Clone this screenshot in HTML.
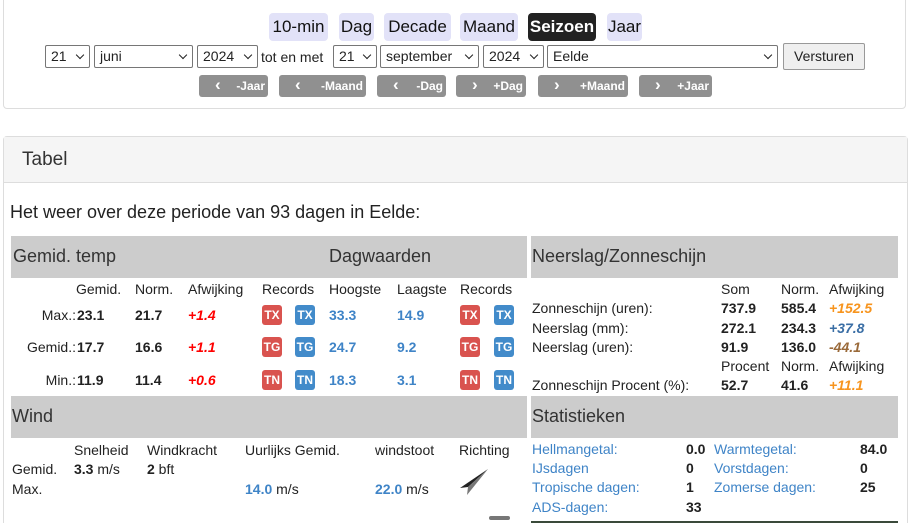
<!DOCTYPE html>
<html style="height:523px;overflow:hidden"><head><meta charset="utf-8"><style>
*{margin:0;padding:0;box-sizing:border-box}
body{width:908px;height:523px;overflow:hidden;background:#fff;font-family:"Liberation Sans",sans-serif;color:#222;position:relative}
.a{position:absolute;white-space:nowrap}
.tab{position:absolute;top:13px;height:28px;background:#e2e2f8;border-radius:4px;font-size:17px;line-height:28px;text-align:center;color:#111}
.sel{position:absolute;top:45px;height:23px;border:1px solid #767676;border-radius:2px;font-size:14px;line-height:21px;padding-left:5px;background:#fff}
.sel:after{content:"";position:absolute;right:6px;top:6px;width:5px;height:5px;border-right:1.5px solid #222;border-bottom:1.5px solid #222;transform:rotate(45deg)}
.nav{position:absolute;top:75px;height:22px;background:#909090;border-radius:3px;color:#fff;font-weight:bold;font-size:12px;line-height:22px}
.nav i{position:absolute;left:16px;top:0;font-style:normal;font-size:17px;line-height:20px}
.nav b{position:absolute;right:3px}
.gh{position:absolute;background:#ccc;font-size:18px;color:#333}
.t{position:absolute;font-size:14px;white-space:nowrap;line-height:16px}
.b{font-weight:bold}
.bl{color:#3f84c7}
.bd{width:20px;height:20px;border-radius:3px;color:#fff;font-weight:bold;font-size:12px;line-height:20px;text-align:center;position:absolute}
.r{background:#d9534f}.u{background:#428bca}
</style></head><body>
<div class="a" style="left:3px;top:-5px;width:903px;height:114px;border:1px solid #ddd;border-radius:4px"></div>
<div class="tab" style="left:269px;width:59px">10-min</div>
<div class="tab" style="left:339px;width:35px">Dag</div>
<div class="tab" style="left:384px;width:67px">Decade</div>
<div class="tab" style="left:460px;width:58px">Maand</div>
<div class="tab" style="left:528px;width:68px;background:#222;color:#fff;font-weight:bold">Seizoen</div>
<div class="tab" style="left:607px;width:35px">Jaar</div>
<div class="sel" style="left:45px;width:45px">21</div>
<div class="sel" style="left:94px;width:99px">juni</div>
<div class="sel" style="left:197px;width:61px">2024</div>
<div class="t" style="left:261px;top:49px">tot en met</div>
<div class="sel" style="left:333px;width:44px">21</div>
<div class="sel" style="left:380px;width:99px">september</div>
<div class="sel" style="left:483px;width:61px">2024</div>
<div class="sel" style="left:547px;width:231px">Eelde</div>
<div class="a" style="left:783px;top:43px;width:82px;height:27px;border:1px solid #999;border-radius:2px;background:#efefef;font-size:14px;line-height:25px;text-align:center">Versturen</div>
<div class="nav" style="left:199px;width:69px"><i>‹</i><b>-Jaar</b></div>
<div class="nav" style="left:279px;width:87px"><i>‹</i><b>-Maand</b></div>
<div class="nav" style="left:377px;width:69px"><i>‹</i><b>-Dag</b></div>
<div class="nav" style="left:456px;width:70px"><i>›</i><b>+Dag</b></div>
<div class="nav" style="left:538px;width:90px"><i>›</i><b>+Maand</b></div>
<div class="nav" style="left:639px;width:73px"><i>›</i><b>+Jaar</b></div>

<div class="a" style="left:3px;top:136px;width:905px;height:400px;border:1px solid #ddd;border-radius:4px"></div>
<div class="a" style="left:4px;top:137px;width:903px;height:46px;background:#f5f5f5;border-bottom:1px solid #ddd"></div>
<div class="a" style="left:22px;top:149px;font-size:19px;color:#333">Tabel</div>
<div class="a" style="left:10px;top:202px;font-size:18px;color:#222">Het weer over deze periode van 93 dagen in Eelde:</div>

<div class="gh" style="left:11px;top:236px;width:516px;height:42px"><span class="a" style="left:2px;top:10px">Gemid. temp</span><span class="a" style="left:318px;top:10px">Dagwaarden</span></div>
<div class="gh" style="left:531px;top:236px;width:367px;height:42px"><span class="a" style="left:1px;top:10px">Neerslag/Zonneschijn</span></div>

<div class="t" style="left:76px;top:281px">Gemid.</div>
<div class="t" style="left:135px;top:281px">Norm.</div>
<div class="t" style="left:188px;top:281px">Afwijking</div>
<div class="t" style="left:262px;top:281px">Records</div>
<div class="t" style="left:329px;top:281px">Hoogste</div>
<div class="t" style="left:397px;top:281px">Laagste</div>
<div class="t" style="left:460px;top:281px">Records</div>

<div class="t" style="right:832px;top:307px">Max.:</div><div class="t b" style="left:77px;top:307px">23.1</div><div class="t b" style="left:135px;top:307px">21.7</div><div class="t b" style="left:188px;top:307px;color:#f00;font-style:italic">+1.4</div>
<div class="bd r" style="left:262px;top:305px">TX</div><div class="bd u" style="left:295px;top:305px">TX</div><div class="t b bl" style="left:329px;top:307px">33.3</div><div class="t b bl" style="left:397px;top:307px">14.9</div><div class="bd r" style="left:460px;top:305px">TX</div><div class="bd u" style="left:494px;top:305px">TX</div>

<div class="t" style="right:832px;top:339px">Gemid.:</div><div class="t b" style="left:77px;top:339px">17.7</div><div class="t b" style="left:135px;top:339px">16.6</div><div class="t b" style="left:188px;top:339px;color:#f00;font-style:italic">+1.1</div>
<div class="bd r" style="left:262px;top:337px">TG</div><div class="bd u" style="left:295px;top:337px">TG</div><div class="t b bl" style="left:329px;top:339px">24.7</div><div class="t b bl" style="left:397px;top:339px">9.2</div><div class="bd r" style="left:460px;top:337px">TG</div><div class="bd u" style="left:494px;top:337px">TG</div>

<div class="t" style="right:832px;top:372px">Min.:</div><div class="t b" style="left:77px;top:372px">11.9</div><div class="t b" style="left:135px;top:372px">11.4</div><div class="t b" style="left:188px;top:372px;color:#f00;font-style:italic">+0.6</div>
<div class="bd r" style="left:262px;top:370px">TN</div><div class="bd u" style="left:295px;top:370px">TN</div><div class="t b bl" style="left:329px;top:372px">18.3</div><div class="t b bl" style="left:397px;top:372px">3.1</div><div class="bd r" style="left:460px;top:370px">TN</div><div class="bd u" style="left:494px;top:370px">TN</div>

<div class="t" style="left:721px;top:281px">Som</div><div class="t" style="left:781px;top:281px">Norm.</div><div class="t" style="left:829px;top:281px">Afwijking</div>
<div class="t" style="left:532px;top:300px">Zonneschijn (uren):</div><div class="t b" style="left:721px;top:300px">737.9</div><div class="t b" style="left:781px;top:300px">585.4</div><div class="t b" style="left:829px;top:300px;color:#f7941d;font-style:italic">+152.5</div>
<div class="t" style="left:532px;top:320px">Neerslag (mm):</div><div class="t b" style="left:721px;top:320px">272.1</div><div class="t b" style="left:781px;top:320px">234.3</div><div class="t b" style="left:829px;top:320px;color:#3a6ea5;font-style:italic">+37.8</div>
<div class="t" style="left:532px;top:339px">Neerslag (uren):</div><div class="t b" style="left:721px;top:339px">91.9</div><div class="t b" style="left:781px;top:339px">136.0</div><div class="t b" style="left:829px;top:339px;color:#9a6a3a;font-style:italic">-44.1</div>
<div class="t" style="left:721px;top:358px">Procent</div><div class="t" style="left:781px;top:358px">Norm.</div><div class="t" style="left:829px;top:358px">Afwijking</div>
<div class="t" style="left:532px;top:377px">Zonneschijn Procent (%):</div><div class="t b" style="left:721px;top:377px">52.7</div><div class="t b" style="left:781px;top:377px">41.6</div><div class="t b" style="left:829px;top:377px;color:#f7941d;font-style:italic">+11.1</div>

<div class="gh" style="left:11px;top:396px;width:516px;height:42px"><span class="a" style="left:1px;top:10px">Wind</span></div>
<div class="gh" style="left:531px;top:396px;width:367px;height:42px"><span class="a" style="left:1px;top:10px">Statistieken</span></div>

<div class="t" style="left:74px;top:442px">Snelheid</div><div class="t" style="left:147px;top:442px">Windkracht</div><div class="t" style="left:245px;top:442px">Uurlijks Gemid.</div><div class="t" style="left:375px;top:442px">windstoot</div><div class="t" style="left:459px;top:442px">Richting</div>
<div class="t" style="left:12px;top:461px">Gemid.</div><div class="t" style="left:74px;top:461px"><b>3.3</b> m/s</div><div class="t" style="left:147px;top:461px"><b>2</b> bft</div>
<div class="t" style="left:12px;top:481px">Max.</div><div class="t" style="left:245px;top:481px"><b class="bl">14.0</b> m/s</div><div class="t" style="left:375px;top:481px"><b class="bl">22.0</b> m/s</div>
<svg class="a" style="left:458px;top:466px" width="34" height="30"><polygon points="30,3 2,22 10,21" fill="#222"/><polygon points="30,3 10,21 9,29" fill="#777"/></svg>
<div class="a" style="left:489px;top:516px;width:21px;height:4px;background:#777;border-radius:2px"></div>

<div class="t bl" style="left:532px;top:441px">Hellmangetal:</div><div class="t b" style="left:686px;top:441px">0.0</div><div class="t bl" style="left:714px;top:441px">Warmtegetal:</div><div class="t b" style="left:860px;top:441px">84.0</div>
<div class="t bl" style="left:532px;top:460px">IJsdagen</div><div class="t b" style="left:686px;top:460px">0</div><div class="t bl" style="left:714px;top:460px">Vorstdagen:</div><div class="t b" style="left:860px;top:460px">0</div>
<div class="t bl" style="left:532px;top:479px">Tropische dagen:</div><div class="t b" style="left:686px;top:479px">1</div><div class="t bl" style="left:714px;top:479px">Zomerse dagen:</div><div class="t b" style="left:860px;top:479px">25</div>
<div class="t bl" style="left:532px;top:499px">ADS-dagen:</div><div class="t b" style="left:686px;top:499px">33</div>
<div class="a" style="left:531px;top:521px;width:367px;height:2px;background:#3a4a3a"></div>
</body></html>
